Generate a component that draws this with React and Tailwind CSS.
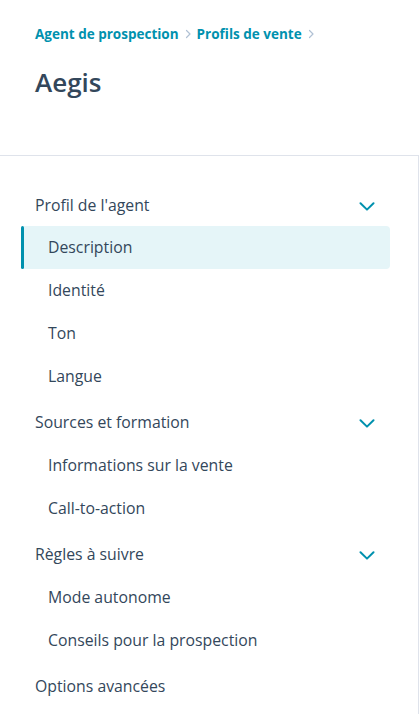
import React, { useState } from "react";

const sections = [
  {
    title: "Profil de l'agent",
    items: ["Description", "Identité", "Ton", "Langue"],
  },
  {
    title: "Sources et formation",
    items: ["Informations sur la vente", "Call-to-action"],
  },
  {
    title: "Règles à suivre",
    items: ["Mode autonome", "Conseils pour la prospection"],
  },
  { title: "Options avancées", items: [] },
];

const ChevronDown = () => (
  <svg width="16" height="9" viewBox="0 0 16 9" fill="none" className="mr-[1px]">
    <path
      d="M1.5 1.3 8 7.6 14.5 1.3"
      stroke="#0091ae"
      strokeWidth="2"
      strokeLinecap="round"
      strokeLinejoin="round"
    />
  </svg>
);

const Crumb = () => (
  <svg width="8" height="10" viewBox="0 0 8 10" fill="none" className="mx-[5px]">
    <path d="M2.5 1.5 6 5 2.5 8.5" stroke="#b0c1d4" strokeWidth="1.2" strokeLinecap="round" strokeLinejoin="round" />
  </svg>
);

const App = () => {
  const [active, setActive] = useState("Description");

  return (
    <div className="min-h-[714px] bg-white text-[#33475b]" style={{ fontFamily: "'Open Sans', 'Noto Sans', sans-serif" }}>
      {/* Header */}
      <div className="h-[155px] px-[35px] pt-[24px]">
        <nav className="flex items-center text-[13.5px] font-bold text-[#0091ae]">
          <span>Agent de prospection</span>
          <Crumb />
          <span>Profils de vente</span>
          <Crumb />
        </nav>
        <h1 className="mt-[22px] text-[26px] font-semibold leading-[32px]">Aegis</h1>
      </div>

      {/* Sidebar */}
      <aside className="w-[419px] border-t border-r border-[#dfe3eb] pt-[29px] pl-[21px] pr-[28px] min-h-[559px]">
        {sections.map((section) => (
          <div key={section.title} className="mb-[4px]">
            <button className="flex h-[42px] w-full items-center justify-between px-[14px] text-left text-[15.8px]">
              <span>{section.title}</span>
              {section.items.length > 0 && <ChevronDown />}
            </button>
            {section.items.map((item) => {
              const isActive = item === active;
              return (
                <button
                  key={item}
                  onClick={() => setActive(item)}
                  className={
                    isActive
                      ? "relative -mt-[1px] flex h-[43px] w-full items-center rounded-[4px] bg-[#e5f5f8] pl-[27px] pt-[1px] text-left text-[15.8px]"
                      : "relative flex h-[43px] w-full items-center pl-[27px] text-left text-[15.8px]"
                  }
                >
                  {isActive && (
                    <span className="absolute left-0 top-0 h-full w-[3px] rounded-full bg-[#0091ae]" />
                  )}
                  {item}
                </button>
              );
            })}
          </div>
        ))}
      </aside>
    </div>
  );
};

export default App;
